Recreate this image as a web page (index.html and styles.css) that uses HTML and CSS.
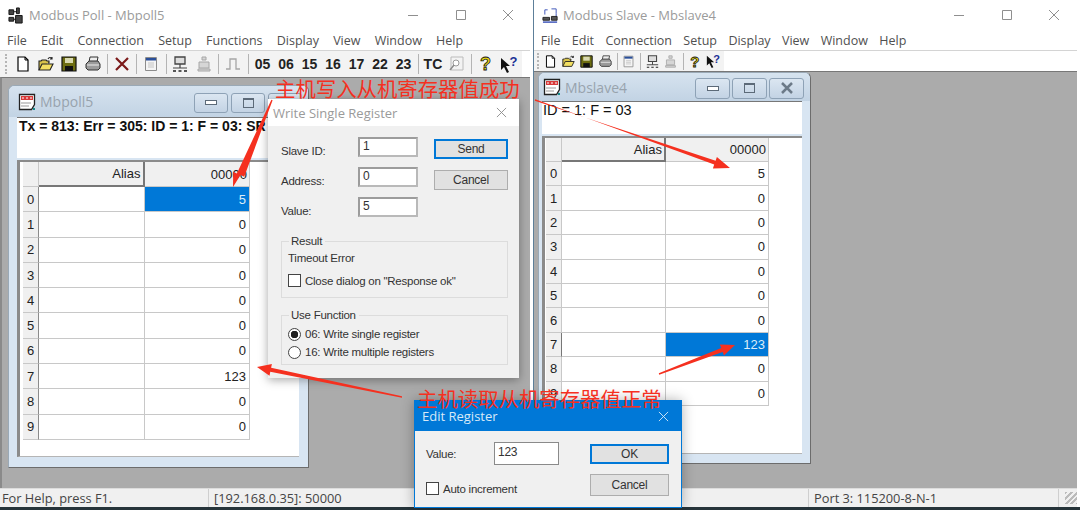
FILE: index.html
```html
<!DOCTYPE html>
<html>
<head>
  <title>Modbus Poll / Modbus Slave</title>
  <link rel="stylesheet" href="styles.css">
</head>
<body>
  <svg class="defs" width="0" height="0">
    <symbol id="i-new" viewBox="0 0 16 16"><path d="M3 1h7l3 3v11H3z" fill="#fff" stroke="#000" stroke-width="1.2"/><path d="M10 1v3h3" fill="none" stroke="#000"/></symbol>
    <symbol id="i-open" viewBox="0 0 16 16"><path d="M1 14V5h2l1-1h4l1 1h2v2h-1" fill="#d8c34a" stroke="#222" stroke-width="1.1"/><path d="M1 14l3-6h11l-3 6z" fill="#f2df62" stroke="#222" stroke-width="1.1"/><path d="M10 3c1-2 3-2 4 0M14 1v2h-2" fill="none" stroke="#222" stroke-width="1.1"/></symbol>
    <symbol id="i-save" viewBox="0 0 16 16"><path d="M1 1h14v14H1z" fill="#6d6d10" stroke="#111" stroke-width="1.2"/><path d="M4 2h8v5H4z" fill="#d9d9b0"/><path d="M4 10h8v5H4z" fill="#111"/></symbol>
    <symbol id="i-print" viewBox="0 0 16 16"><path d="M5 1h8l-1 5H4z" fill="#eee" stroke="#333"/><path d="M1 8l3-3h9l2 3v4l-2 2H3l-2-2z" fill="#9b9b9b" stroke="#333"/><path d="M2 9h12" stroke="#eee"/></symbol>
    <symbol id="i-del" viewBox="0 0 16 16"><path d="M2 2l12 12M14 2L2 14" fill="none" stroke="#7c1a1a" stroke-width="2.2"/></symbol>
    <symbol id="i-win" viewBox="0 0 16 16"><path d="M2.500 1.500h11v13h-11z" fill="#f4f4f4" stroke="#8c8c8c"/><path d="M3 2h10v2.500H3z" fill="#2a4f9a"/><path d="M5 7h6M5 9h6M5 11h6" stroke="#c4c4c4"/></symbol>
    <symbol id="i-conn" viewBox="0 0 16 16"><path d="M3 1h10v7H3z" fill="#ddd" stroke="#444" stroke-width="1.3"/><path d="M8 8v4M1 12h14" stroke="#444" stroke-width="1.200"/><path d="M1 15h3M6.500 15h3M12 15h3" stroke="#222" stroke-width="1.300"/></symbol>
    <symbol id="i-disc" viewBox="0 0 16 16"><path d="M6 1h4v3h-4zM3 6h10v6H3zM2 13h12v2H2z" fill="#d6d6d6" stroke="#a6a6a6"/></symbol>
    <symbol id="i-pulse" viewBox="0 0 16 16"><path d="M1 13h4V3h6v10h4" fill="none" stroke="#a6a6a6" stroke-width="1.300"/></symbol>
    <symbol id="i-find" viewBox="0 0 16 16"><path d="M3 1h12v13H3z" fill="#f3f3f3" stroke="#bbb"/><circle cx="8" cy="7" r="3" fill="#fff" stroke="#9a9a9a"/><path d="M6 9l-4 5" stroke="#8a8a8a" stroke-width="1.500"/></symbol>
    <symbol id="i-arrow" viewBox="0 0 11 16"><path d="M1 1l9 8H6l3 6-2 1-3-6-3 3z" fill="#111"/></symbol>
    <symbol id="i-doc" viewBox="0 0 18 18"><path d="M1.500 1.500h15v10l-3 5h-12z" fill="#fff" stroke="#222" stroke-width="1.300"/><path d="M3 3h12v4H3z" fill="#d83a3a"/><path d="M4 5h2M8 5h2M12 5h2" stroke="#fff"/><path d="M3 10h10M3 13h8" stroke="#999"/><path d="M15 15h2v2h-2z" fill="#158a8a"/></symbol>
    <symbol id="i-poll" viewBox="0 0 18 18"><path d="M1 3h5v5H1zM1 11h5v4H1zM9 1h3v6H9zM8 9h7v8H8z" fill="#444" stroke="#111"/><path d="M6 5h3M6 13h2" stroke="#111"/></symbol>
    <symbol id="i-slave" viewBox="0 0 18 18"><path d="M3 3h3M10 2h5v5M15 7v4M3 3v5" fill="none" stroke="#3a52b8"/><path d="M1 11h7v3H1zM10 10h6v4h-6z" fill="#555" stroke="#222"/><path d="M1 16h15" stroke="#3a52b8" stroke-width="1.500"/></symbol>
  </svg>

  <div class="app app-poll">
    <div class="titlebar">
      <svg class="app-icon"><use href="#i-poll"/></svg>
      <span class="title-text">Modbus Poll - Mbpoll5</span>
      <div class="caption caption-poll">
        <svg viewBox="0 0 12 12"><path d="M1 6.500h10"/></svg>
        <svg viewBox="0 0 12 12"><path d="M1.500 1.500h9v9h-9z"/></svg>
        <svg viewBox="0 0 12 12"><path d="M1 1l10 10M11 1L1 11"/></svg>
      </div>
    </div>
    <div class="menubar">
      <span>File</span><span>Edit</span><span>Connection</span><span>Setup</span><span>Functions</span><span>Display</span><span>View</span><span>Window</span><span>Help</span>
    </div>
    <div class="toolbar">
      <i class="grip"></i>
      <button class="tb"><svg><use href="#i-new"/></svg></button>
      <button class="tb"><svg><use href="#i-open"/></svg></button>
      <button class="tb"><svg><use href="#i-save"/></svg></button>
      <button class="tb"><svg><use href="#i-print"/></svg></button>
      <i class="sep"></i>
      <button class="tb"><svg><use href="#i-del"/></svg></button>
      <i class="sep"></i>
      <button class="tb"><svg><use href="#i-win"/></svg></button>
      <i class="sep"></i>
      <button class="tb"><svg><use href="#i-conn"/></svg></button>
      <button class="tb"><svg><use href="#i-disc"/></svg></button>
      <i class="sep"></i>
      <button class="tb"><svg><use href="#i-pulse"/></svg></button>
      <i class="sep"></i>
      <button class="tb tb-num">05</button>
      <button class="tb tb-num">06</button>
      <button class="tb tb-num">15</button>
      <button class="tb tb-num">16</button>
      <button class="tb tb-num">17</button>
      <button class="tb tb-num">22</button>
      <button class="tb tb-num">23</button>
      <i class="sep"></i>
      <button class="tb tb-num">TC</button>
      <button class="tb"><svg><use href="#i-find"/></svg></button>
      <i class="sep"></i>
      <button class="tb tb-help">?</button>
      <button class="tb tb-what"><svg><use href="#i-arrow"/></svg><b>?</b></button>
    </div>
    <div class="mdi">
      <div class="child child-poll">
        <div class="child-title">
          <svg class="child-icon"><use href="#i-doc"/></svg>
          <span class="child-name">Mbpoll5</span>
          <span class="cbtn"><i class="ico-min"></i></span>
          <span class="cbtn"><i class="ico-max"></i></span>
          <span class="cbtn"></span>
        </div>
        <div class="info info-bold">Tx = 813: Err = 305: ID = 1: F = 03: SR</div>
        <div class="view">
          <div class="grid">
            <div class="corner"></div><div class="colhead alias">Alias</div><div class="colhead">00000</div>
            <div class="rowhead">0</div><div class="cell"></div><div class="cell sel">5</div>
            <div class="rowhead">1</div><div class="cell"></div><div class="cell">0</div>
            <div class="rowhead">2</div><div class="cell"></div><div class="cell">0</div>
            <div class="rowhead">3</div><div class="cell"></div><div class="cell">0</div>
            <div class="rowhead">4</div><div class="cell"></div><div class="cell">0</div>
            <div class="rowhead">5</div><div class="cell"></div><div class="cell">0</div>
            <div class="rowhead">6</div><div class="cell"></div><div class="cell">0</div>
            <div class="rowhead">7</div><div class="cell"></div><div class="cell">123</div>
            <div class="rowhead">8</div><div class="cell"></div><div class="cell">0</div>
            <div class="rowhead">9</div><div class="cell"></div><div class="cell">0</div>
          </div>
        </div>
      </div>
    </div>
    <div class="statusbar">
      <span class="st-help">For Help, press F1.</span>
      <span class="st-conn">[192.168.0.35]: 50000</span>
    </div>
  </div>

  <div class="app app-slave">
    <div class="titlebar">
      <svg class="app-icon"><use href="#i-slave"/></svg>
      <span class="title-text">Modbus Slave - Mbslave4</span>
      <div class="caption caption-slave">
        <svg viewBox="0 0 12 12"><path d="M1 6.500h10"/></svg>
        <svg viewBox="0 0 12 12"><path d="M1.500 1.500h9v9h-9z"/></svg>
        <svg viewBox="0 0 12 12"><path d="M1 1l10 10M11 1L1 11"/></svg>
      </div>
    </div>
    <div class="menubar">
      <span>File</span><span>Edit</span><span>Connection</span><span>Setup</span><span>Display</span><span>View</span><span>Window</span><span>Help</span>
    </div>
    <div class="toolbar toolbar-small">
      <i class="grip"></i>
      <button class="tb"><svg><use href="#i-new"/></svg></button>
      <button class="tb"><svg><use href="#i-open"/></svg></button>
      <button class="tb"><svg><use href="#i-save"/></svg></button>
      <button class="tb"><svg><use href="#i-print"/></svg></button>
      <i class="sep"></i>
      <button class="tb"><svg><use href="#i-win"/></svg></button>
      <i class="sep"></i>
      <button class="tb"><svg><use href="#i-conn"/></svg></button>
      <button class="tb"><svg><use href="#i-disc"/></svg></button>
      <i class="sep"></i>
      <button class="tb tb-help">?</button>
      <button class="tb tb-what"><svg><use href="#i-arrow"/></svg><b>?</b></button>
    </div>
    <div class="mdi">
      <div class="child child-slave">
        <div class="child-title">
          <svg class="child-icon"><use href="#i-doc"/></svg>
          <span class="child-name">Mbslave4</span>
          <span class="cbtn"><i class="ico-min"></i></span>
          <span class="cbtn"><i class="ico-max"></i></span>
          <span class="cbtn"><svg viewBox="0 0 14 14"><path d="M2 2l10 10M12 2L2 12"/></svg></span>
        </div>
        <div class="info">ID = 1: F = 03</div>
        <div class="view">
          <div class="grid">
            <div class="corner"></div><div class="colhead alias">Alias</div><div class="colhead">00000</div>
            <div class="rowhead">0</div><div class="cell"></div><div class="cell">5</div>
            <div class="rowhead">1</div><div class="cell"></div><div class="cell">0</div>
            <div class="rowhead">2</div><div class="cell"></div><div class="cell">0</div>
            <div class="rowhead">3</div><div class="cell"></div><div class="cell">0</div>
            <div class="rowhead">4</div><div class="cell"></div><div class="cell">0</div>
            <div class="rowhead">5</div><div class="cell"></div><div class="cell">0</div>
            <div class="rowhead">6</div><div class="cell"></div><div class="cell">0</div>
            <div class="rowhead active">7</div><div class="cell"></div><div class="cell sel">123</div>
            <div class="rowhead">8</div><div class="cell"></div><div class="cell">0</div>
            <div class="rowhead">9</div><div class="cell"></div><div class="cell">0</div>
          </div>
        </div>
      </div>
    </div>
    <div class="statusbar">
      <span class="st-port">Port 3: 115200-8-N-1</span>
      <span class="st-grip"></span>
    </div>
  </div>

  <div class="dialog dlg-write">
    <div class="dlg-title">
      <span>Write Single Register</span>
      <svg viewBox="0 0 12 12"><path d="M1 1l10 10M11 1L1 11"/></svg>
    </div>
    <div class="dlg-body">
      <div class="dlg-top">
        <div class="fields">
          <label>Slave ID:</label><div class="input">1</div>
          <label>Address:</label><div class="input">0</div>
          <label>Value:</label><div class="input">5</div>
        </div>
        <div class="actions">
          <div class="btn btn-default">Send</div>
          <div class="btn">Cancel</div>
        </div>
      </div>
      <fieldset class="group group-result">
        <legend>Result</legend>
        <div class="result-text">Timeout Error</div>
        <div class="check-row"><i class="check"></i>Close dialog on "Response ok"</div>
      </fieldset>
      <fieldset class="group group-func">
        <legend>Use Function</legend>
        <div class="radio-row"><i class="radio on"></i>06: Write single register</div>
        <div class="radio-row"><i class="radio"></i>16: Write multiple registers</div>
      </fieldset>
    </div>
  </div>

  <div class="dialog dlg-edit">
    <div class="dlg-title">
      <span>Edit Register</span>
      <svg viewBox="0 0 12 12"><path d="M1 1l10 10M11 1L1 11"/></svg>
    </div>
    <div class="edit-body">
      <div class="edit-left">
        <div class="edit-row"><label>Value:</label><div class="input">123</div></div>
        <div class="check-row"><i class="check"></i>Auto increment</div>
      </div>
      <div class="actions">
        <div class="btn btn-default">OK</div>
        <div class="btn">Cancel</div>
      </div>
    </div>
  </div>

  <svg class="arrows" viewBox="0 0 1080 510">
    <polygon points="272.600,100.300 244.200,176.700 240.500,175 233,187 233.200,171.700 236.900,173.400 271.400,99.700"/>
    <polygon points="535.200,99.300 714.200,164.600 712.900,168.400 730,168 716.900,157 715.600,160.800 534.800,100.700"/>
    <polygon points="659.200,374.700 722.600,351.900 724,355.600 735,345 719.800,344.400 721.200,348.100 658.800,373.300"/>
    <polygon points="402,396.300 271.100,367.800 271.900,363.900 257,367 269.500,375.700 270.300,371.800 402,397.700"/>
  </svg>
  <div class="note note-write">主机写入从机寄存器值成功</div>
  <div class="note note-read">主机读取从机寄存器值正常</div>
</body>
</html>
```

FILE: styles.css
```css
html, body {
  margin: 0;
  height: 100%;
}
body {
  position: relative;
  width: 1080px;
  height: 510px;
  overflow: hidden;
  font-family: "Liberation Sans", Arial, sans-serif;
  background: linear-gradient(#fff 0, #fff 507px, #26343a 507px);
}
.defs {
  position: absolute;
}

/* app windows */
.app {
  position: absolute;
  top: 0;
  height: 507px;
  display: flex;
  flex-direction: column;
  box-sizing: border-box;
  background: #fff;
}
.app-poll {
  left: 0;
  width: 533px;
  padding-right: 3px;
}
.app-slave {
  left: 533px;
  width: 547px;
  border-left: 1px solid #5d7f99;
  padding-right: 3px;
}
.titlebar {
  height: 30px;
  flex: none;
  display: flex;
  align-items: center;
  padding-left: 8px;
  font-family: "Open Sans", sans-serif;
  font-size: 13px;
  color: #9b9b9b;
}
.app-icon {
  width: 17px;
  height: 17px;
  margin-right: 4px;
}
.title-text {
  flex: 1;
}
.caption {
  display: flex;
  align-items: center;
  gap: 35.500px;
}
.caption svg {
  width: 12px;
  height: 12px;
  fill: none;
  stroke: #8f8f8f;
}
.caption-poll {
  margin-right: 16px;
}
.caption-slave {
  margin-right: 17px;
}
.menubar {
  height: 20px;
  flex: none;
  display: flex;
  align-items: center;
  border-bottom: 1px solid #d4d4d4;
  font-family: "Open Sans", sans-serif;
  font-size: 12.500px;
  color: #505050;
}
.menubar span {
  padding: 0 7.100px;
}
.app-slave .menubar {
  padding-left: 1px;
}
.app-slave .menubar span {
  padding: 0 5.700px;
}
.toolbar {
  height: 26px;
  flex: none;
  display: flex;
  align-items: center;
  padding-left: 5px;
  box-sizing: border-box;
  background: linear-gradient(90deg, #f3f3f3 522px, #fff 522px);
}
.grip {
  width: 2px;
  height: 20px;
  margin-right: 4px;
  border-left: 2px dotted #b5b5b5;
  box-sizing: border-box;
}
.tb {
  width: 23.300px;
  height: 22px;
  padding: 0;
  border: 0;
  background: none;
  display: flex;
  align-items: center;
  justify-content: center;
  flex: none;
}
.tb svg {
  width: 16px;
  height: 16px;
}
.tb-num {
  width: 23.500px;
  font: bold 14px "Liberation Sans", sans-serif;
  color: #222;
}
.tb-help {
  font: bold 18px "Liberation Sans", sans-serif;
  color: #e9d713;
  -webkit-text-stroke: 0.8px #111;
}
.tb-what {
  font: bold 13px "Liberation Sans", sans-serif;
  color: #1a2f96;
}
.tb-what svg {
  width: 11px;
  height: 16px;
  margin-top: 1px;
}
.tb-what b {
  margin: -5px 0 0 -2px;
}
.sep {
  width: 1px;
  height: 20px;
  margin: 0 2px 0 3px;
  background: #b4b4b4;
  flex: none;
}
.toolbar-small {
  height: 20px;
  padding-left: 3px;
  background: linear-gradient(90deg, #f3f3f3 190px, #fff 190px);
}
.toolbar-small .grip {
  height: 16px;
  margin-right: 2px;
}
.toolbar-small .tb {
  width: 18.300px;
  height: 18px;
}
.toolbar-small .tb svg {
  width: 13px;
  height: 13px;
}
.toolbar-small .tb-help {
  font-size: 15px;
}
.toolbar-small .tb-what {
  font-size: 11px;
}
.toolbar-small .tb-what svg {
  width: 9px;
}
.toolbar-small .sep {
  height: 17px;
  margin: 0 2px 0 2.500px;
}
.mdi {
  position: relative;
  flex: 1;
  background: #ababab;
  border-top: 1px solid #777;
  border-left: 2px solid #8a8a8a;
}
.app-slave .mdi {
  border-left: 0;
}
.statusbar {
  height: 19px;
  flex: none;
  display: flex;
  align-items: center;
  background: #f0f0f0;
  border-top: 1px solid #dcdcdc;
  box-sizing: border-box;
  font-family: "Open Sans", sans-serif;
  font-size: 12.800px;
  color: #444;
}
.st-help {
  width: 206px;
  padding-left: 2px;
  border-right: 1px solid #cfcfcf;
  height: 100%;
  line-height: 19px;
}
.st-conn {
  padding-left: 5px;
}
.st-port {
  margin-left: 274px;
  width: 246px;
  padding-left: 5px;
  border-left: 1px solid #cfcfcf;
  border-right: 1px solid #cfcfcf;
  line-height: 18px;
}
.st-grip {
  width: 12px;
  height: 12px;
  margin-left: 6px;
  background: repeating-linear-gradient(135deg, #bbb 0 2px, transparent 2px 4px);
}

/* child frames */
.child {
  position: absolute;
  display: flex;
  flex-direction: column;
  box-sizing: border-box;
  background: #d8e5f2;
  border: 1px solid #6c6c6c;
  border-left-color: #9aa9b6;
  border-top-color: #9aa9b6;
  border-radius: 6px 6px 0 0;
}
.child-poll {
  left: 6px;
  top: 7px;
  width: 301px;
  height: 383px;
  padding: 0 9px 10px 8px;
}
.child-slave {
  left: 4px;
  top: 0;
  width: 273px;
  height: 392px;
  padding: 0 8px 9px 3px;
}
.child-title {
  height: 31px;
  flex: none;
  display: flex;
  align-items: center;
  gap: 3px;
  background: linear-gradient(#d6e3ef, #c2d3e4);
  margin: 0 -9px 0 -8px;
  padding: 0 6px 0 9px;
  border-radius: 6px 6px 0 0;
}
.child-slave .child-title {
  height: 28px;
  margin: 0 -8px 0 -3px;
  padding-left: 4px;
}
.child-icon {
  width: 18px;
  height: 18px;
}
.child-name {
  flex: 1;
  margin-left: 1px;
  font-family: "Open Sans", sans-serif;
  font-size: 14px;
  color: #98a3ad;
}
.cbtn {
  width: 32px;
  height: 18px;
  margin-top: 2px;
  display: flex;
  align-items: center;
  justify-content: center;
  border: 1px solid #8ea2b6;
  border-radius: 3px;
  background: linear-gradient(#dbe6f1, #c3d3e4);
}
.child-slave .cbtn {
  width: 33px;
  height: 19px;
  margin-left: -1px;
}
.ico-min {
  width: 10px;
  height: 3px;
  background: #fff;
  border: 1px solid #5c6a78;
}
.ico-max {
  width: 9px;
  height: 7px;
  border: 1px solid #5c6a78;
  border-top-width: 2px;
}
.cbtn svg {
  width: 14px;
  height: 14px;
  fill: none;
  stroke: #6c7a88;
  stroke-width: 2.500px;
}
.info {
  height: 41px;
  flex: none;
  box-sizing: border-box;
  padding: 0 2px;
  background: #fff;
  border-top: 1px solid #777;
  font-size: 14px;
  line-height: 17px;
  color: #111;
  white-space: nowrap;
}
.info-bold {
  font-weight: bold;
}
.child-slave .info {
  height: 33px;
  padding: 0 1px;
  font-size: 14.500px;
}
.view {
  flex: 1;
  margin-top: 2px;
  background: #fff;
  border-top: 2px solid #8b8b8b;
  border-left: 3px solid #8b8b8b;
  border-bottom: 1px solid #b5b5b5;
  padding-left: 3px;
}
.child-slave .view {
  padding-left: 1px;
}
.grid {
  display: grid;
  width: 227px;
  grid-template-columns: 16px 105.500px 105.500px;
  grid-template-rows: 25px repeat(10, 25.300px);
  font-size: 13px;
  color: #222;
}
.child-slave .grid {
  width: 223px;
  grid-template-columns: 16px 104px 103px;
  grid-template-rows: 24px repeat(10, 24.400px);
}
.corner, .colhead {
  background: #f0f0f0;
  box-sizing: border-box;
  border-right: 1px solid #c8c8c8;
  border-bottom: 1px solid #c8c8c8;
}
.colhead {
  display: flex;
  align-items: center;
  justify-content: flex-end;
  padding-right: 2px;
}
.alias {
  border-right: 2px solid #777;
  border-bottom: 2px solid #777;
}
.rowhead {
  display: flex;
  align-items: center;
  justify-content: center;
  background: #f0f0f0;
  box-sizing: border-box;
  border-right: 1px solid #8b8b8b;
  border-bottom: 1px solid #c8c8c8;
}
.child-slave .rowhead {
  border-right-color: #c8c8c8;
}
.child-slave .rowhead.active {
  border-right-color: #777;
}
.cell {
  display: flex;
  align-items: center;
  justify-content: flex-end;
  padding-right: 3px;
  box-sizing: border-box;
  border-right: 1px solid #c8c8c8;
  border-bottom: 1px solid #c8c8c8;
}
.cell.sel {
  background: #0078d7;
  color: #dcecf9;
}

/* dialogs */
.dialog {
  position: absolute;
  box-sizing: border-box;
  background: #f0f0f0;
  font-size: 11.500px;
  letter-spacing: -0.250px;
  color: #333;
}
.dlg-write {
  left: 268px;
  top: 99px;
  width: 251px;
  height: 279px;
  box-shadow: 0 2px 9px rgba(0, 0, 0, 0.35);
}
.dlg-title {
  height: 27px;
  display: flex;
  align-items: center;
  justify-content: space-between;
  padding: 0 12px 0 5px;
  background: #fff;
  font-family: "Open Sans", sans-serif;
  font-size: 13px;
  letter-spacing: 0;
  color: #9a9a9a;
}
.dlg-title svg {
  width: 11px;
  height: 11px;
  fill: none;
  stroke: #8c8c8c;
}
.dlg-body {
  padding: 11px 11px 0 13px;
}
.dlg-top {
  display: flex;
  gap: 16px;
}
.fields {
  display: grid;
  grid-template-columns: 77px 60px;
  grid-auto-rows: 20px;
  row-gap: 10px;
  align-items: center;
}
.fields label {
  margin-top: 7px;
}
.input {
  box-sizing: border-box;
  height: 20px;
  padding-left: 3px;
  line-height: 15px;
  background: #fff;
  border: 2px solid #9c9c9c;
  border-right-color: #b9b9b9;
  border-bottom-color: #b9b9b9;
  font-size: 12px;
}
.actions {
  display: flex;
  flex-direction: column;
  gap: 11px;
  margin-top: 2px;
}
.btn {
  width: 74px;
  height: 20px;
  box-sizing: border-box;
  text-align: center;
  line-height: 18px;
  font-size: 12px;
  background: #e1e1e1;
  border: 1px solid #adadad;
}
.btn-default {
  border: 2px solid #0078d7;
  line-height: 16px;
}
.group {
  margin: 0;
  min-width: 0;
  padding: 0 0 0 6px;
  border: 1px solid #dcdcdc;
  box-sizing: border-box;
  width: 227px;
}
.group legend {
  padding: 0 3px 0 2px;
  margin-left: 1px;
  line-height: 14px;
}
.group-result {
  margin-top: 17px;
  height: 64px;
}
.group-func {
  margin-top: 10px;
  height: 57px;
  padding-top: 3px;
}
.result-text {
  line-height: 14px;
  margin-top: 3px;
}
.check-row {
  display: flex;
  align-items: center;
  gap: 4px;
  white-space: nowrap;
}
.group .check-row {
  margin-top: 9px;
}
.check {
  width: 13px;
  height: 13px;
  box-sizing: border-box;
  background: #fff;
  border: 1px solid #444;
}
.radio-row {
  display: flex;
  align-items: center;
  gap: 4px;
  height: 18px;
  white-space: nowrap;
}
.radio {
  width: 13px;
  height: 13px;
  box-sizing: border-box;
  background: #fff;
  border: 1px solid #444;
  border-radius: 50%;
}
.radio.on {
  background: radial-gradient(circle, #222 0 3.500px, #fff 4px);
}
.dlg-edit {
  left: 414px;
  top: 400px;
  width: 268px;
  height: 108px;
  border: 1px solid #0078d7;
  box-shadow: 0 0 12px rgba(0, 0, 0, 0.3);
}
.dlg-edit .dlg-title {
  height: 30px;
  padding: 0 12px 0 7px;
  background: #0078d7;
  color: #d8e9f7;
}
.dlg-edit .dlg-title svg {
  stroke: #d8e9f7;
}
.edit-body {
  display: flex;
  justify-content: space-between;
  padding: 11px 12px 0 11px;
}
.edit-left {
  display: flex;
  flex-direction: column;
  gap: 17px;
  width: 133px;
}
.edit-row {
  display: grid;
  grid-template-columns: 68px 65px;
  align-items: center;
}
.edit-row .input {
  height: 23px;
  line-height: 18px;
  border-width: 1px;
  border-color: #8a8a8a;
}
.dlg-edit .actions {
  gap: 10px;
}
.dlg-edit .btn {
  width: 79px;
}
.dlg-edit .btn:last-child {
  height: 22px;
  line-height: 20px;
}

/* red notes drawn over the screenshot */
.arrows {
  position: absolute;
  left: 0;
  top: 0;
  width: 1080px;
  height: 510px;
  fill: #f5301f;
}
.note {
  position: absolute;
  font-family: "Noto Sans CJK SC", sans-serif;
  font-size: 20.400px;
  line-height: 24px;
  color: #f5301f;
  white-space: nowrap;
}
.note-write {
  left: 275px;
  top: 76px;
}
.note-read {
  left: 417px;
  top: 386px;
}
```
